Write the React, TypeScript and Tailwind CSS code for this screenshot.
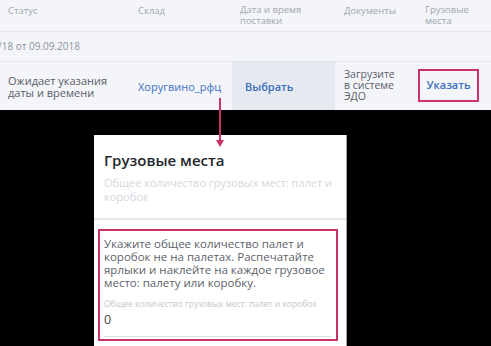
import React from 'react';

const pink = '#c9336a';

export default function App() {
  return (
    <div
      className="relative w-[491px] h-[346px] overflow-hidden bg-black"
      style={{ fontFamily: '"Open Sans", "Noto Sans", sans-serif' }}
    >
      {/* Table fragment */}
      <div className="h-[110px] bg-[#f3f5f8] overflow-hidden">
        {/* Header */}
        <div className="flex h-[32px] border-b border-[#e2e5ea] text-[9.5px] leading-[11px] text-[#a2a8b1] pt-[4px]">
          <div className="w-[138px] pl-2 pt-[1px]">Статус</div>
          <div className="w-[94px] pt-[1px]">Склад</div>
          <div className="w-[103px] pl-2">Дата и время<br />поставки</div>
          <div className="w-[83px] pl-[9px] pt-[1px]">Документы</div>
          <div className="flex-1 pl-[7px]">Грузовые<br />места</div>
        </div>

        {/* Order row */}
        <div className="flex items-center h-[30px] border-b border-[#e2e5ea] text-[10px] text-[#8d939c]">
          <span className="-ml-[2px]">/18 от 09.09.2018</span>
        </div>

        {/* Data row */}
        <div className="flex h-[48px]">
          <div className="w-[138px] pl-2 flex items-center text-[11px] leading-[12px] text-[#5a6069] pt-[1px]">
            <span>Ожидает указания<br />даты и времени</span>
          </div>
          <div className="w-[94px] flex items-center text-[11px] font-medium text-[#3d72c2] pt-[3px]">
            Хоругвино_рфц
          </div>
          <div className="w-[103px] pl-[13px] flex items-center bg-[#e6eaf0] text-[11px] font-semibold text-[#3a6dba] pt-[3px]">
            Выбрать
          </div>
          <div className="w-[83px] pl-[9px] pt-[7px] text-[10.5px] leading-[11px] text-[#5a6069]">
            Загрузите<br />в системе<br />ЭДО
          </div>
          <div className="flex-1 pt-[7px]">
            <div
              className="w-[61px] h-[33px] flex items-center justify-center border-2 text-[11px] font-semibold text-[#3a6dba]"
              style={{ borderColor: pink }}
            >
              Указать
            </div>
          </div>
        </div>
      </div>

      {/* Modal fragment */}
      <div className="ml-[94px] mt-[25px] w-[253px] border-r border-[#9aa0a8]">
        <div className="bg-white pl-[10px] pr-3 pt-[15px] pb-[14px]">
          <div className="text-[15px] leading-[20px] font-semibold text-[#23272d]">Грузовые места</div>
          <div className="mt-[6px] text-[11px] leading-[14px] text-[#d5d8dd]">
            Общее количество грузовых мест: палет и<br />коробок
          </div>
        </div>
        <div className="h-[2px] bg-[#e4e7eb]" />
        <div className="bg-white pt-[9px] pl-[4px] pr-[8px] h-[130px]">
          <div className="border-2 px-[4px] pt-[6px] pb-[2px]" style={{ borderColor: pink }}>
            <div className="text-[11.5px] leading-[13px] text-[#5c6169] whitespace-nowrap">
              Укажите общее количество палет и<br />
              коробок не на палетах. Распечатайте<br />
              ярлыки и наклейте на каждое грузовое<br />
              место: палету или коробку.
            </div>
            <div className="mt-[10px] text-[8.5px] leading-[10px] text-[#c3c7cd] whitespace-nowrap">
              Общее количество грузовых мест: палет и коробок
            </div>
            <div className="mt-[3px] pb-[8px] border-b border-[#d9dce1] text-[12.5px] leading-[16px] text-[#41454b]">
              0
            </div>
          </div>
        </div>
      </div>

      {/* Arrow */}
      <div className="absolute left-[219px] top-[98px] w-[2px] h-[44px]" style={{ background: pink }} />
      <svg className="absolute left-[216px] top-[140px]" width="8" height="8" viewBox="0 0 8 8">
        <path d="M0 0 L8 0 L4 7 Z" fill={pink} />
      </svg>
    </div>
  );
}
